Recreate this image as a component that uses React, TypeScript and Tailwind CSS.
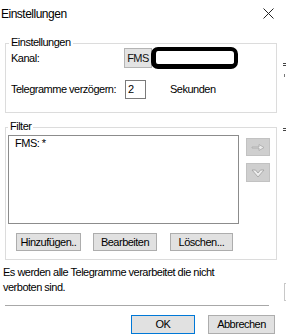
export default function App() {
  const font = "font-['Liberation_Sans',Arial,sans-serif]";
  const btn =
    "h-[18px] flex items-center justify-center bg-[#e1e1e1] border border-[#adadad] box-border";

  return (
    <div
      className={`relative w-[286px] h-[335px] overflow-hidden bg-white text-black text-[11px] tracking-[-0.5px] ${font}`}
    >
      {/* title bar */}
      <div className="h-[27px] flex items-center justify-between pl-[1px] pr-[12px]">
        <span className="text-[12px] leading-[14px]">Einstellungen</span>
        <svg width="11" height="11" viewBox="0 0 11 11">
          <path d="M0.5 0.5 L10.5 10.5 M10.5 0.5 L0.5 10.5" stroke="#222" strokeWidth="1" />
        </svg>
      </div>

      {/* group: Einstellungen */}
      <div className="relative mx-[5px] mt-[16px] w-[272px] h-[70px] border border-[#dcdcdc] pt-[4px] pl-[5px]">
        <span className="absolute left-[3px] -top-[8px] bg-white px-[2px] leading-[13px]">
          Einstellungen
        </span>
        <div className="flex items-center h-[20px]">
          <span className="w-[113px] leading-[13px]">Kanal:</span>
          <div className="w-[28px] h-[20px] flex items-center justify-center bg-[#e3e3e3] border border-[#b4b4b4] box-border text-[#111]">
            FMS
          </div>
          <div className="-ml-[1px] w-[87px] h-[22px] border-[4px] border-b-[5px] border-l-[5px] border-black rounded-[7px] bg-white box-border" />
        </div>
        <div className="flex items-center h-[19px] mt-[12px]">
          <span className="w-[114px] leading-[13px]">Telegramme verzögern:</span>
          <div className="w-[21px] h-[19px] border border-[#7a7a7a] box-border pl-[2px] flex items-center">
            2
          </div>
          <span className="ml-[24px]">Sekunden</span>
        </div>
      </div>

      {/* group: Filter */}
      <div className="relative mx-[5px] mt-[14px] w-[272px] h-[133px] border border-[#dcdcdc] pt-[7px] pl-[2px]">
        <span className="absolute left-[2px] -top-[8px] bg-white px-[2px] leading-[13px]">
          Filter
        </span>
        <div className="flex">
          <div className="w-[231px] h-[89px] border border-[#8c8c8c] box-border pl-[6px] pt-[1px] leading-[13px]">
            FMS: *
          </div>
          <div className="ml-[7px] flex flex-col">
            <div className="mt-[3px] w-[24px] h-[18px] bg-[#cfcfcf] border border-[#c2c2c2] box-border flex items-center justify-center">
              <svg width="14" height="9" viewBox="0 0 14 9">
                <path d="M1 4 H8 V1.5 L13 4.5 L8 7.5 V5 H1 Z" fill="#ededed" stroke="#a8a8a8" strokeWidth="0.8" />
              </svg>
            </div>
            <div className="mt-[7px] w-[24px] h-[19px] bg-[#cfcfcf] border border-[#c2c2c2] box-border flex items-center justify-center">
              <svg width="14" height="10" viewBox="0 0 14 10">
                <path d="M1 2 L4.5 2 L7 5 L9.5 2 L13 2 L7 9 Z" fill="#ededed" stroke="#a0a0a0" strokeWidth="0.8" />
              </svg>
            </div>
          </div>
        </div>
        <div className="flex mt-[9px] pl-[8px]">
          <div className={`${btn} w-[65px]`}>Hinzufügen..</div>
          <div className={`${btn} w-[64px] ml-[12px]`}>Bearbeiten</div>
          <div className={`${btn} w-[63px] ml-[13px]`}>Löschen...</div>
        </div>
      </div>

      <p className="mt-[5px] pl-[3px] leading-[15px]">
        Es werden alle Telegramme verarbeitet die nicht
        <br />
        verboten sind.
      </p>

      <div className="mt-[10px] ml-[5px] w-[264px] h-px bg-[#a8a8a8]" />

      <div className="flex mt-[9px]">
        <div className="ml-[131px] w-[64px] h-[19px] flex items-center justify-center bg-[#e1e1e1] border border-[#0078d7] box-border">
          OK
        </div>
        <div className="ml-[13px] w-[67px] h-[19px] flex items-center justify-center bg-[#e1e1e1] border border-[#adadad] box-border">
          Abbrechen
        </div>
      </div>

      {/* bits of the window behind, at the right edge */}
      <div className="absolute left-[283px] top-[63px] w-[3px] h-px bg-[#444]" />
      <div className="absolute left-[283px] top-[65px] w-[3px] h-px bg-[#444]" />
      <div className="absolute left-[284px] top-[74px] w-[1px] h-[3px] bg-[#777]" />
      <div className="absolute left-[283px] top-[128px] w-[3px] h-px bg-[#444]" />
      <div className="absolute left-[283px] top-[130px] w-[3px] h-px bg-[#444]" />
      <div className="absolute left-[284px] top-[283px] w-[2px] h-[18px] border-l border-t border-b border-[#c8c8c8]" />
    </div>
  );
}
